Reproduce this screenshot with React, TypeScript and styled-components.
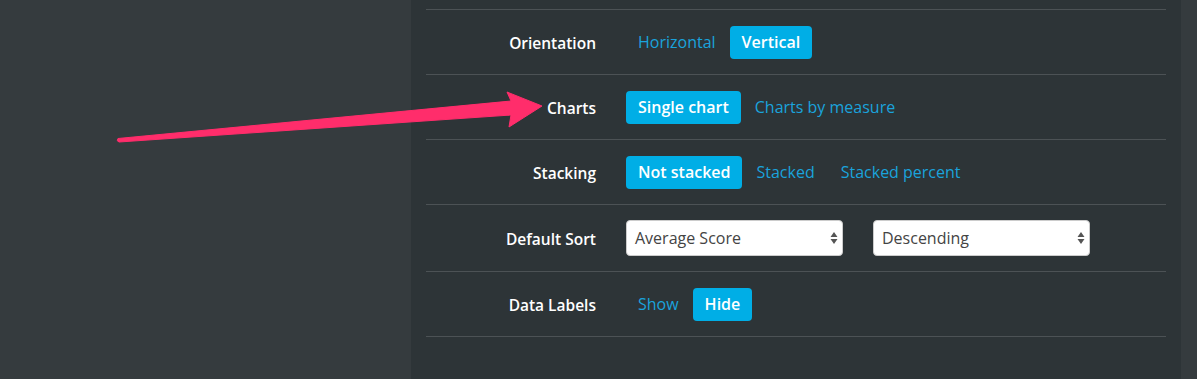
import * as React from "react";
import styled, { createGlobalStyle } from "styled-components";

const GlobalStyle = createGlobalStyle`
  html, body {
    margin: 0;
    padding: 0;
    background: #353b3e;
  }
  * {
    box-sizing: border-box;
  }
`;

const Page = styled.div`
  position: relative;
  display: flex;
  width: 1197px;
  height: 379px;
  overflow: hidden;
  font-family: "Open Sans", Lato, sans-serif;
  background: #353b3e;
`;

const Sidebar = styled.div`
  width: 411px;
  flex-shrink: 0;
`;

const Panel = styled.div`
  width: 770px;
  flex-shrink: 0;
  background: #2d3437;
  padding: 9px 15px 0;
`;

const Row = styled.div<{ $h?: number }>`
  display: grid;
  grid-template-columns: 170px 1fr;
  column-gap: 30px;
  align-items: center;
  height: ${p => p.$h ?? 65}px;
  border-top: 1px solid #4c5255;
  &:last-child {
    border-bottom: 1px solid #4c5255;
  }
`;

const Label = styled.div`
  text-align: right;
  color: #fff;
  font-size: 15.5px;
  font-weight: 600;
  padding-top: 2px;
`;

const Options = styled.div`
  display: flex;
  align-items: center;
  gap: 2px;
`;

const Option = styled.button<{ $active?: boolean }>`
  height: 33px;
  padding: 0 12px;
  border: none;
  border-radius: 4px;
  font-family: inherit;
  font-size: 16px;
  font-weight: ${p => (p.$active ? 600 : 400)};
  color: ${p => (p.$active ? "#fff" : "#1aa3dc")};
  background: ${p => (p.$active ? "#00aee6" : "transparent")};
  cursor: pointer;
`;

const Selects = styled.div`
  display: flex;
  gap: 30px;
`;

const SelectBox = styled.div`
  position: relative;
  width: 217px;
  height: 36px;
  background: #fff;
  border: 1px solid #ccc;
  border-radius: 4px;
  display: flex;
  align-items: center;
  padding: 0 8px;
  color: #444;
  font-size: 16px;
`;

const Caret = styled.svg`
  position: absolute;
  right: 4px;
  top: 50%;
  transform: translateY(-50%);
`;

const ArrowLayer = styled.svg`
  position: absolute;
  left: 0;
  top: 0;
  pointer-events: none;
`;

const Right = styled.div`
  flex: 1;
`;

const Select = ({ value }: { value: string }) => (
  <SelectBox>
    {value}
    <Caret width="8" height="14" viewBox="0 0 8 14">
      <path d="M4 1 L7.5 6 L0.5 6 Z M4 13 L0.5 8 L7.5 8 Z" fill="#555" />
    </Caret>
  </SelectBox>
);

const App = () => (
  <Page>
    <GlobalStyle />
    <Sidebar />
    <Panel>
      <Row>
        <Label>Orientation</Label>
        <Options>
          <Option>Horizontal</Option>
          <Option $active>Vertical</Option>
        </Options>
      </Row>
      <Row>
        <Label>Charts</Label>
        <Options>
          <Option $active>Single chart</Option>
          <Option>Charts by measure</Option>
        </Options>
      </Row>
      <Row>
        <Label>Stacking</Label>
        <Options>
          <Option $active>Not stacked</Option>
          <Option>Stacked</Option>
          <Option>Stacked percent</Option>
        </Options>
      </Row>
      <Row $h={67}>
        <Label>Default Sort</Label>
        <Selects>
          <Select value="Average Score" />
          <Select value="Descending" />
        </Selects>
      </Row>
      <Row $h={66}>
        <Label>Data Labels</Label>
        <Options>
          <Option>Show</Option>
          <Option $active>Hide</Option>
        </Options>
      </Row>
    </Panel>
    <Right />
    <ArrowLayer width="1197" height="379" viewBox="0 0 1197 379">
      <path
        d="M118 138.5 L511 101 L507 92 L542 106 L509 127 L511 115 L119 142 Q116 141 118 138.5 Z"
        fill="#ff2d6b"
        stroke="#ff2d6b"
        strokeLinejoin="round"
        strokeWidth="1"
      />
    </ArrowLayer>
  </Page>
);

export default App;
